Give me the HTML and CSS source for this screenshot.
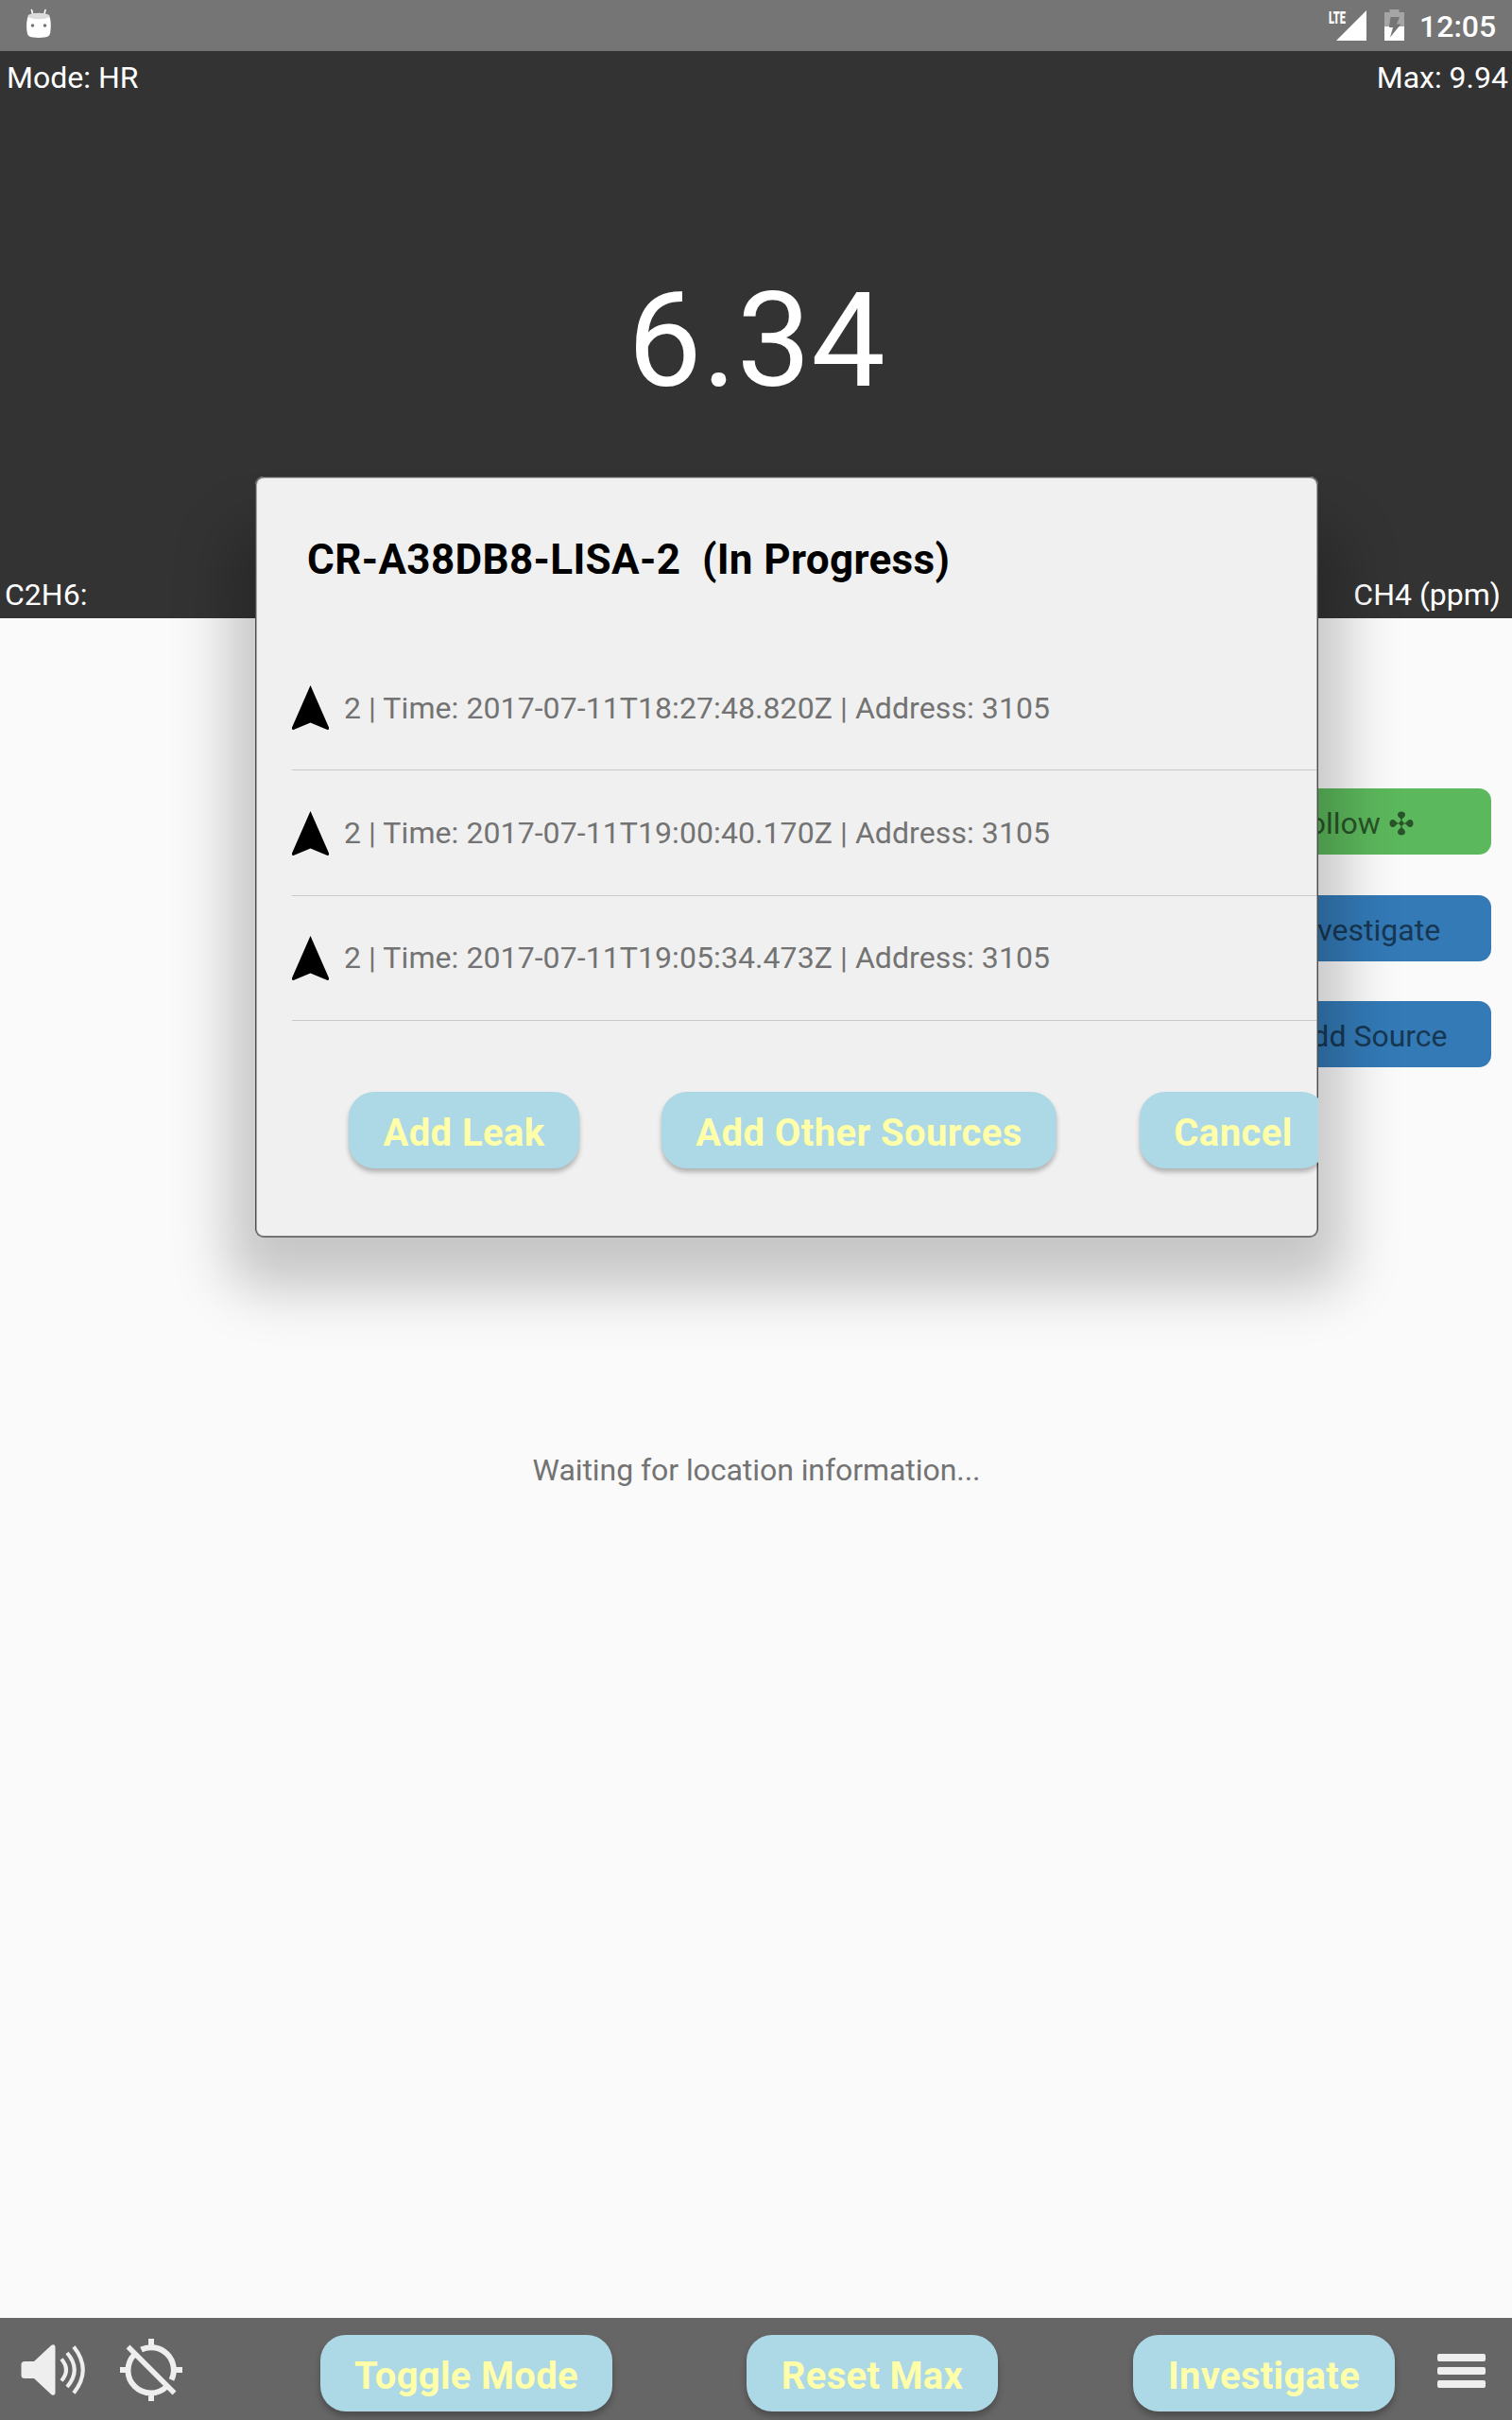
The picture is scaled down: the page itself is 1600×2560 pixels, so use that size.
FILE: index.html
```html
<!DOCTYPE html>
<html lang="en">
<head>
<meta charset="utf-8">
<title>Survey</title>
<link rel="stylesheet" href="styles.css">
</head>
<body>
<div class="screen">
  <header class="status">
    <svg class="droid" width="28" height="32" viewBox="0 0 28 32">
      <path d="M6.500 1.500L8 7.500M21 1.500L19.500 7.500" stroke="#fff" stroke-width="1.600" stroke-linecap="round"/>
      <path d="M2.500 8.500C1 13 .8 19 1.500 24C2 29 4 30 8 30.600C12 31.100 16 31.100 20 30.600C24 30 26 29 26.400 24C27 19 27 13 25.500 8.500Z" fill="#fff"/>
      <ellipse cx="14" cy="8" rx="11.700" ry="3.200" fill="#dcdcdc"/>
      <circle cx="7.500" cy="18" r="1.800" fill="#757575"/><circle cx="20.500" cy="18" r="1.800" fill="#757575"/>
    </svg>
    <div class="signal">
      <span class="lte">LTE</span>
      <svg width="32" height="32" viewBox="0 0 32 32"><path d="M32 0V32H0Z" fill="#fff"/></svg>
    </div>
    <svg class="battery" width="21" height="33" viewBox="0 0 21 33">
      <path d="M0 3H5.500V0H15.500V3H21V33H0Z" fill="#a5a5a5"/>
      <path d="M0 18H21V33H0Z" fill="#fff"/>
      <path d="M6.500 8H16L13 15.500H17.500L6 29.500L9 19H5Z" fill="#757575"/>
    </svg>
    <span class="clock">12:05</span>
  </header>

  <section class="readout">
    <div class="row"><span>Mode: HR</span><span>Max: 9.94</span></div>
    <div class="value">6.34</div>
    <div class="row bottom"><span>C2H6:</span><span>CH4 (ppm)</span></div>
  </section>

  <main class="map">
    <div class="side">
      <div class="side-btn follow">Follow
        <svg width="26" height="26" viewBox="0 0 26 26" fill="currentColor">
          <path d="M8 13H18M13 7V19" stroke="currentColor" stroke-width="1.200"/>
          <circle cx="13" cy="13" r="2.400"/>
          <path id="petal" d="M13 9C11 7 9 6 9 3.800C9 1.600 11 .5 13 .5S17 1.600 17 3.800C17 6 15 7 13 9Z"/>
          <use href="#petal" transform="rotate(90 13 13)"/><use href="#petal" transform="rotate(180 13 13)"/><use href="#petal" transform="rotate(270 13 13)"/>
        </svg>
      </div>
      <div class="side-btn inspect">Investigate</div>
      <div class="side-btn">Add Source</div>
    </div>
    <p class="waiting">Waiting for location information...</p>
  </main>

  <footer class="toolbar">
    <svg class="volume" width="70" height="56" viewBox="0 0 70 56">
      <path d="M4 19H14L32.500 1.800Q36.500 0 36.500 4V52Q36.500 56 32.500 54.200L14 37H4Q.5 37 .5 33.500V22.500Q.5 19 4 19Z" fill="#eee"/>
      <path d="M43 16.500Q53 28 43 39.500M49 10Q64.500 28 49 46M56 3.500Q75.500 28 56 52.500" fill="none" stroke="#eee" stroke-width="4.100"/>
    </svg>
    <svg class="gps" width="66" height="66" viewBox="0 0 66 66" fill="none" stroke="#eee" stroke-width="6">
      <path d="M22.500 11.500A24 24 0 0 1 54.500 43.500M15.500 16.500A24 24 0 0 0 49.500 50.500M33 0V8M33 58V66M0 33H8M58 33H66"/>
      <path d="M8.500 8.500L57.500 57.500" stroke-width="5.500"/>
    </svg>
    <button class="btn toggle">Toggle Mode</button>
    <button class="btn reset">Reset Max</button>
    <button class="btn investigate">Investigate</button>
    <div class="menu"><i></i><i></i><i></i></div>
  </footer>

  <div class="dialog-wrap">
    <div class="dialog">
      <h1>CR-A38DB8-LISA-2&nbsp; (In Progress)</h1>
      <ul>
        <li><svg width="39" height="47" viewBox="0 0 39 47"><path d="M19.500 0L39 44.500V46.500L37.500 47L19.500 39.500L1.500 47L0 46.500V44.500Z"/></svg>2 | Time: 2017-07-11T18:27:48.820Z | Address: 3105</li>
        <li><svg width="39" height="47" viewBox="0 0 39 47"><path d="M19.500 0L39 44.500V46.500L37.500 47L19.500 39.500L1.500 47L0 46.500V44.500Z"/></svg>2 | Time: 2017-07-11T19:00:40.170Z | Address: 3105</li>
        <li><svg width="39" height="47" viewBox="0 0 39 47"><path d="M19.500 0L39 44.500V46.500L37.500 47L19.500 39.500L1.500 47L0 46.500V44.500Z"/></svg>2 | Time: 2017-07-11T19:05:34.473Z | Address: 3105</li>
      </ul>
      <div class="actions">
        <button class="btn leak">Add Leak</button>
        <button class="btn other">Add Other Sources</button>
        <button class="btn cancel">Cancel</button>
      </div>
    </div>
  </div>
</div>
</body>
</html>
```
FILE: styles.css
```css
* { box-sizing: border-box; }
body { margin: 0; font-family: Roboto, "Liberation Sans", sans-serif; font-size: 32px; line-height: 38px; }
svg { display: block; flex: none; }
.screen { position: relative; width: 1600px; height: 2560px; display: flex; flex-direction: column; overflow: hidden; background: #fafafa; }

.status { height: 54px; background: #757575; color: #fff; display: flex; align-items: flex-start; padding-left: 27px; }
.droid { margin-top: 9px; }
.signal { display: flex; margin: 11px 0 0 auto; position: relative; }
.lte { position: absolute; left: -8px; top: -1px; font-size: 19px; line-height: 18px; font-weight: 900; transform: scaleX(.58); transform-origin: left; }
.battery { margin: 10px 0 0 19px; }
.clock { width: 114px; padding: 9px 0 0 16px; font-weight: 500; white-space: nowrap; }

.readout { height: 600px; background: #333; color: #fff; display: flex; flex-direction: column; }
.row { display: flex; justify-content: space-between; padding: 9px 4px 0 7px; }
.value { flex: 1; text-align: center; font-size: 140px; line-height: 164px; padding-top: 177px; padding-left: 1px; }
.row.bottom { padding: 0 12px 6px 5px; }

.map { flex: 1; display: flex; flex-direction: column; }
.side { align-self: flex-end; width: 257px; margin: 180px 22px 0 0; display: flex; flex-direction: column; gap: 42.500px; }
.side-btn { height: 70px; border-radius: 13px; background: #337ab7; color: #173752; display: flex; align-items: center; justify-content: center; gap: 9px; padding-top: 4px; }
.side-btn.follow { background: #5cb85c; color: #295329; padding-right: 36px; }
.side-btn.inspect { padding-right: 7px; }
.waiting { margin: 407px 0 0 1px; text-align: center; color: #737373; letter-spacing: -.06px; }

.btn { font: 700 40px/47px Roboto, "Liberation Sans", sans-serif; letter-spacing: .42px; color: #ffa; background: #add8e6; border: 0; border-radius: 27px; height: 81px; padding: 6px 0 0; flex: none; box-shadow: 0 4px 5px rgba(0,0,0,.26); white-space: nowrap; }
.toolbar { height: 108px; background: #666; display: flex; align-items: flex-start; padding: 18px 28px 0 22px; }
.toolbar .btn { letter-spacing: .3px; box-shadow: 0 5px 7px rgba(0,0,0,.26); }
.volume { margin-top: 9px; }
.gps { margin: 4px 0 0 35px; }
.toggle { width: 309px; margin-left: 146px; }
.reset { width: 266px; margin-left: 142px; }
.investigate { width: 277px; margin-left: 143px; }
.menu { width: 51px; margin: 20px 0 0 auto; display: flex; flex-direction: column; gap: 6.500px; }
.menu i { height: 7.600px; border-radius: 2px; background: #eee; }

.dialog-wrap { position: absolute; left: 270px; top: 504px; width: 1125px; height: 805px; }
.dialog-wrap::before { content: ""; position: absolute; inset: 55px 0 0; border-radius: 9px; box-shadow: 0 26px 60px 28px rgba(0,0,0,.21); }
.dialog { position: relative; height: 805px; border-radius: 9px; overflow: hidden; background: #f0f0f0; box-shadow: inset 0 0 0 1px #4c4c4c, inset 0 0 0 2px #a5a5a5; }
.dialog h1 { margin: 0; padding: 62px 0 0 55px; font-size: 44px; line-height: 52px; font-weight: 700; letter-spacing: .36px; color: #000; }
.dialog ul { list-style: none; margin: 65px 2px 0 39px; padding: 0; color: #737373; letter-spacing: .08px; }
.dialog li { height: 132.400px; border-bottom: 1px solid #c8c8c8; display: flex; align-items: center; gap: 16px; }
.dialog li svg { fill: #000; }
.actions { display: flex; padding: 75px 0 0 99px; }
.leak { width: 244px; }
.other { width: 418px; margin-left: 87px; }
.cancel { width: 198px; margin-left: 88px; }
```
